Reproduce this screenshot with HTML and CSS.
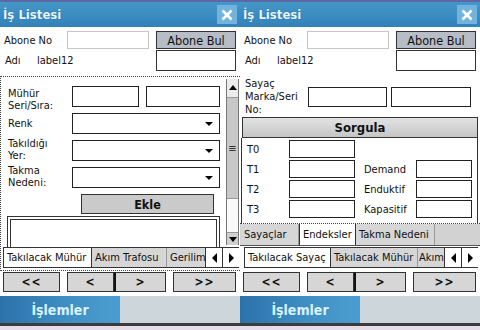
FILE: index.html
```html
<!DOCTYPE html>
<html lang="tr">
<head>
    <meta charset="UTF-8">
    <meta name="viewport" content="width=device-width, initial-scale=1.0">
    <title>İş Listesi</title>
    <link rel="stylesheet" href="styles.css">
</head>
<body>
<div class="device">

    <!-- left screen: Takılacak Mühür -->
    <section class="screen">
        <header class="titlebar">
            <span class="title">İş Listesi</span>
            <span class="close"><svg width="12" height="12" viewBox="0 0 12 12"><path d="M1.5 1.5L10.5 10.5M10.5 1.5L1.5 10.5" stroke="#fff" stroke-width="2.6"/></svg></span>
        </header>
        <div class="top">
            <div class="row first">
                <span class="lbl abone">Abone No</span>
                <span class="box soft abone-in"></span>
                <span class="btn find">Abone Bul</span>
            </div>
            <div class="row">
                <span class="lbl adi">Adı</span>
                <span class="lbl">label12</span>
                <span class="box name"></span>
            </div>
        </div>
        <div class="tabctl">
            <div class="pane">
                <div class="form">
                    <span class="flbl up1">Mühür<br>Seri/Sıra:</span>
                    <div class="pair"><span class="box seri"></span><span class="box sira"></span></div>
                    <span class="flbl mid">Renk</span>
                    <span class="box combo"></span>
                    <span class="flbl up2">Takıldığı<br>Yer:</span>
                    <span class="box combo"></span>
                    <span class="flbl up2">Takma<br>Nedeni:</span>
                    <span class="box combo"></span>
                    <span class="btn ekle">Ekle</span>
                    <span class="listbox"></span>
                </div>
                <div class="sbar">
                    <span class="sb-up"></span>
                    <span class="sb-thumb">≡</span>
                    <span class="sb-track"></span>
                    <span class="sb-down"></span>
                </div>
            </div>
            <div class="tabs outer left-tabs">
                <div class="tablist">
                    <span class="tab on w89">Takılacak Mühür</span>
                    <span class="tab w75">Akım Trafosu</span>
                    <span class="tab">Gerilim</span>
                </div>
                <div class="arrows"><span class="arr prev"></span><span class="arr next"></span></div>
            </div>
        </div>
        <div class="nav">
            <span class="btn nb first-b">&lt;&lt;</span>
            <span class="btn nb prev-b">&lt;</span>
            <span class="btn nb next-b">&gt;</span>
            <span class="btn nb last-b">&gt;&gt;</span>
        </div>
        <footer class="menubar">
            <span class="menu">İşlemler</span>
            <span class="menu-rest"></span>
        </footer>
        <div class="bottom"></div>
    </section>

    <!-- right screen: Takılacak Sayaç / Endeksler -->
    <section class="screen">
        <header class="titlebar">
            <span class="title">İş Listesi</span>
            <span class="close"><svg width="12" height="12" viewBox="0 0 12 12"><path d="M1.5 1.5L10.5 10.5M10.5 1.5L1.5 10.5" stroke="#fff" stroke-width="2.6"/></svg></span>
        </header>
        <div class="top">
            <div class="row first">
                <span class="lbl abone">Abone No</span>
                <span class="box soft abone-in"></span>
                <span class="btn find">Abone Bul</span>
            </div>
            <div class="row">
                <span class="lbl adi">Adı</span>
                <span class="lbl">label12</span>
                <span class="box name"></span>
            </div>
        </div>
        <div class="rform">
            <div class="sayac">
                <span class="slbl">Sayaç<br>Marka/Seri<br>No:</span>
                <span class="box marka"></span>
                <span class="box seri-no"></span>
            </div>
            <span class="btn sorgula">Sorgula</span>
            <div class="group">
                <span class="tl">T0</span><span class="box t"></span><span></span><span></span>
                <span class="tl">T1</span><span class="box t"></span><span class="tl2">Demand</span><span class="box t"></span>
                <span class="tl">T2</span><span class="box t"></span><span class="tl2">Enduktif</span><span class="box t"></span>
                <span class="tl">T3</span><span class="box t"></span><span class="tl2">Kapasitif</span><span class="box t"></span>
            </div>
        </div>
        <div class="inner-ctl">
            <div class="tabs inner">
                <span class="tab w58">Sayaçlar</span>
                <span class="tab on w57">Endeksler</span>
                <span class="tab w79">Takma Nedeni</span>
            </div>
        </div>
        <div class="tabs outer right-tabs">
            <div class="tablist">
                <span class="tab on w87">Takılacak Sayaç</span>
                <span class="tab w87">Takılacak Mühür</span>
                <span class="tab short">Akım</span>
            </div>
            <div class="arrows"><span class="arr prev"></span><span class="arr next"></span></div>
        </div>
        <div class="nav">
            <span class="btn nb first-b">&lt;&lt;</span>
            <span class="btn nb prev-b">&lt;</span>
            <span class="btn nb next-b">&gt;</span>
            <span class="btn nb last-b">&gt;&gt;</span>
        </div>
        <footer class="menubar">
            <span class="menu">İşlemler</span>
            <span class="menu-rest"></span>
        </footer>
        <div class="bottom"></div>
    </section>

</div>
</body>
</html>
```

FILE: styles.css
```css
body {
    margin: 0;
    font-family: "DejaVu Sans Condensed", "Liberation Sans", Arial, sans-serif;
    font-size: 11px;
    color: #111;
    background: #fff;
}
.device {
    display: flex;
    width: 480px;
    height: 330px;
}
.screen {
    width: 240px;
    height: 330px;
    display: flex;
    flex-direction: column;
    background: #fff;
    overflow: hidden;
}

/* title bar */
.titlebar {
    height: 27px;
    flex: none;
    box-sizing: border-box;
    border-top: 2px solid #5c67a4;
    background: linear-gradient(#4597c9, #3282ba);
    display: flex;
    align-items: center;
    justify-content: space-between;
    padding: 0 3px 0 3px;
}
.title {
    font-weight: bold;
    font-size: 13px;
    color: #e6f6ff;
    text-shadow: 0 0 1px #1b5a88;
}
.close {
    width: 20px;
    height: 19px;
    background: #72b3dd;
    display: flex;
    align-items: center;
    justify-content: center;
}

/* common controls */
.box {
    display: block;
    box-sizing: border-box;
    border: 1px solid #222;
    background: #fff;
    height: 21px;
}
.box.soft { border-color: #c6c6c6; }
.btn {
    box-sizing: border-box;
    border: 1px solid #333;
    background: #d4d4d4;
    display: flex;
    align-items: center;
    justify-content: center;
    color: #111;
}

/* header rows */
.top {
    height: 49px;
    flex: none;
    box-sizing: border-box;
    padding: 4px 4px 0 4px;
}
.row {
    display: flex;
    align-items: center;
}
.row.first { height: 18px; margin-bottom: 1px; }
.lbl.abone { width: 63px; }
.lbl.adi { width: 32px; padding-left: 1px; }
.abone-in { width: 82px; height: 18px; }
.find {
    margin-left: auto;
    width: 80px;
    height: 18px;
    background: #b6bdc4;
    font-size: 12.5px;
}
.name {
    margin-left: auto;
    width: 80px;
    height: 21px;
    border-color: #333;
}

/* left tab control */
.tabctl {
    height: 195px;
    flex: none;
    box-sizing: border-box;
    border-top: 1px dotted #444;
    border-left: 1px dotted #444;
    border-bottom: 1px dotted #444;
    display: flex;
    flex-direction: column;
}
.pane {
    height: 170px;
    flex: none;
    display: flex;
    overflow: hidden;
}
.form {
    flex: 1;
    padding: 9px 0 0 7px;
    display: grid;
    grid-template-columns: 64px 148px;
    grid-auto-rows: 21px;
    row-gap: 6px;
    align-content: start;
}
.flbl { line-height: 12px; }
.flbl.up1 { margin-top: 2px; }
.flbl.up2 { margin-top: -2px; }
.flbl.mid { align-self: center; }
.pair {
    display: flex;
    justify-content: space-between;
}
.seri { width: 67px; }
.sira { width: 74px; }
.combo {
    display: flex;
    align-items: center;
    justify-content: flex-end;
    padding-right: 6px;
}
.combo::after {
    content: "";
    border-left: 4px solid transparent;
    border-right: 4px solid transparent;
    border-top: 4px solid #000;
}
.ekle {
    grid-column: 1 / -1;
    margin-left: 73px;
    width: 133px;
    height: 20px;
    background: #cacaca;
    font-weight: bold;
    font-size: 12.5px;
}
.listbox {
    grid-column: 1 / -1;
    margin: -5px 0 0 -1px;
    width: 213px;
    height: 40px;
    box-sizing: border-box;
    border: 4px double #333;
}

/* scrollbar */
.sbar {
    width: 13px;
    margin: 2px 1px 2px 0;
    display: flex;
    flex-direction: column;
    box-sizing: border-box;
    border-left: 1px solid #777;
    border-right: 1px solid #777;
}
.sb-up, .sb-down {
    display: flex;
    align-items: center;
    justify-content: center;
    background: #ececec;
}
.sb-up { height: 18px; border-bottom: 1px solid #999; }
.sb-up::after {
    content: "";
    border-left: 4px solid transparent;
    border-right: 4px solid transparent;
    border-bottom: 5px solid #000;
}
.sb-thumb {
    height: 101px;
    background: #c8c8c8;
    display: flex;
    align-items: center;
    justify-content: center;
    font-size: 11px;
    color: #333;
}
.sb-track {
    height: 33px;
    background: #fafafa;
    border-top: 1px solid #999;
    border-bottom: 1px solid #999;
}
.sb-down { height: 12px; background: #d0d0d0; }
.sb-down::after {
    content: "";
    border-left: 4px solid transparent;
    border-right: 4px solid transparent;
    border-top: 5px solid #000;
}

/* tab strips */
.tabs {
    display: flex;
    box-sizing: border-box;
    flex: none;
    white-space: nowrap;
}
.tabs.outer {
    height: 21px;
    border-top: 1px solid #333;
    border-bottom: 1px solid #333;
}
.left-tabs { margin: 0 1px 0 2px; }
.right-tabs { margin: 1px 2px 0 4px; }
.tablist {
    flex: 1;
    min-width: 0;
    display: flex;
    overflow: hidden;
}
.tab {
    flex: none;
    box-sizing: border-box;
    padding: 0 3px;
    line-height: 19px;
    background: #d6d6d6;
    border-right: 1px solid #999;
}
.tab.short { padding: 0 1px; }
.tab.on {
    background: #fff;
    border-left: 1px solid #333;
    border-right: 1px solid #333;
}
.w57 { width: 57px; }
.w58 { width: 58px; }
.w75 { width: 75px; }
.w79 { width: 79px; }
.w87 { width: 87px; }
.w89 { width: 89px; }
.arrows {
    display: flex;
    flex: none;
    background: #fff;
}
.arr {
    width: 16px;
    border-left: 1px solid #333;
    display: flex;
    align-items: center;
    justify-content: center;
}
.arr.prev::after {
    content: "";
    border-top: 5px solid transparent;
    border-bottom: 5px solid transparent;
    border-right: 5px solid #000;
}
.arr.next::after {
    content: "";
    border-top: 5px solid transparent;
    border-bottom: 5px solid transparent;
    border-left: 5px solid #000;
}

/* right form */
.rform {
    height: 147px;
    flex: none;
    display: flex;
    flex-direction: column;
}
.sayac {
    height: 41px;
    display: flex;
    align-items: center;
    padding-left: 5px;
}
.slbl {
    width: 63px;
    line-height: 13px;
}
.marka { width: 79px; height: 20px; margin-right: 4px; }
.seri-no { width: 80px; height: 20px; }
.sorgula {
    height: 21px;
    margin: 0 2px;
    background: linear-gradient(#e2e2e2, #c6c6c6);
    font-weight: bold;
    font-size: 13px;
}
.group {
    flex: 1;
    margin: 0 2px 0 1px;
    border-left: 1px solid #333;
    border-right: 1px solid #333;
    padding: 2px 0 0 5px;
    display: grid;
    grid-template-columns: 42px 66px 61px 56px;
    grid-auto-rows: 18px;
    row-gap: 2px;
    align-content: start;
}
.box.t { height: 18px; }
.tl, .tl2 { align-self: center; }
.tl2 { padding-left: 9px; }

.inner-ctl {
    flex: none;
    border-top: 1px dotted #444;
}
.tabs.inner {
    height: 22px;
    background: #d2d2d2;
    padding-left: 1px;
    border-bottom: 1px solid #555;
}
.tabs.inner .tab { line-height: 21px; }

/* navigation */
.nav {
    flex: none;
    display: flex;
    height: 20px;
    margin-top: 4px;
    padding: 0 4px 0 3px;
}
.tabctl + .nav { margin-top: 1px; }
.nb {
    background: #d6d6d6;
    font-weight: bold;
    font-size: 12px;
    letter-spacing: 1px;
}
.first-b { width: 57px; }
.prev-b { width: 47px; margin-left: 7px; }
.next-b { width: 52px; border-left: 2px solid #111; }
.last-b { width: 63px; margin-left: 7px; }

/* menu bar */
.menubar {
    flex: none;
    display: flex;
    height: 27px;
    margin-top: 4px;
}
.menu {
    width: 120px;
    background: linear-gradient(to right, #2b72a9, #3f8fc4 55%, #4c9dcf);
    color: #d8f3ff;
    font-weight: bold;
    font-size: 14px;
    display: flex;
    align-items: center;
    justify-content: center;
}
.menu-rest {
    flex: 1;
    background: #cdd6da;
}
.bottom {
    flex: 1;
    border-top: 3px solid #3c3c3c;
    background: #e6dde9;
}
```
